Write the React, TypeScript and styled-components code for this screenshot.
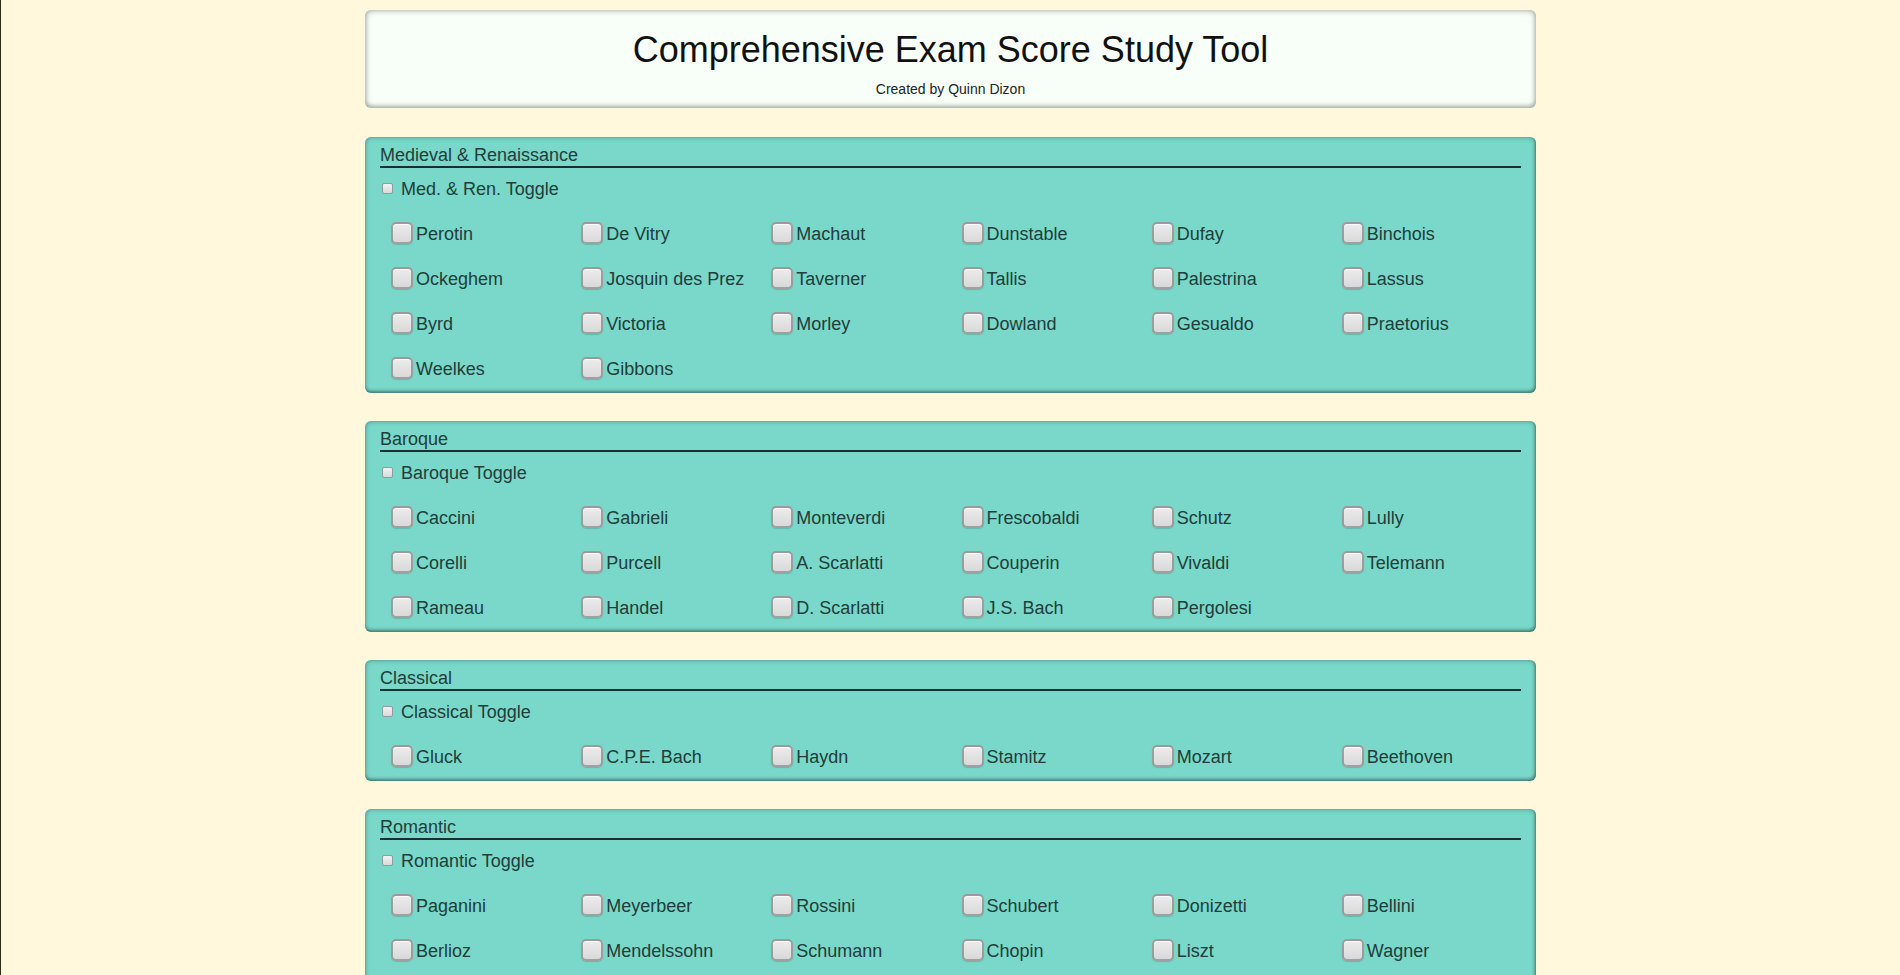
import React from "react";
import styled, { createGlobalStyle } from "styled-components";

const GlobalStyle = createGlobalStyle`
  html, body {
    margin: 0;
    padding: 0;
    background: #fff8dc;
  }
  body {
    border-left: 1px solid #2f2b17;
    font-family: "Liberation Sans", Arial, sans-serif;
  }
`;

const Page = styled.div`
  padding: 10px 0 40px;
  display: flex;
  flex-direction: column;
  align-items: center;
  gap: 28px;
`;

const Header = styled.header`
  box-sizing: border-box;
  width: 1171px;
  margin-bottom: 1px;
  padding: 19px 15px 11px;
  background: #f7fff8;
  border-radius: 6px;
  box-shadow: inset 0 0 6px rgba(0, 0, 0, 0.38), inset 0 -2px 4px rgba(0, 0, 0, 0.15);
  text-align: center;
`;

const Title = styled.h1`
  margin: 0;
  font-size: 36px;
  line-height: 42px;
  font-weight: 400;
  color: #111;
`;

const Credit = styled.div`
  margin-top: 10px;
  font-size: 14px;
  line-height: 16px;
  color: #222;
`;

const Section = styled.section`
  box-sizing: border-box;
  width: 1171px;
  padding: 8px 15px 1px;
  background: #79d8c9;
  border-radius: 6px;
  box-shadow: inset 0 0 5px rgba(0, 0, 0, 0.35), inset -1px -2px 3px rgba(0, 0, 0, 0.3);
  color: #223d3a;
`;

const SectionTitle = styled.div`
  font-size: 18px;
  line-height: 21px;
  border-bottom: 2px solid #17302e;
`;

const ToggleRow = styled.label`
  display: flex;
  align-items: center;
  margin-top: 11px;
  height: 21px;
  font-size: 18px;
`;

const SmallBox = styled.span`
  box-sizing: border-box;
  width: 11px;
  height: 11px;
  margin: -2px 8px 0 2px;
  border-radius: 2px;
  border: 1px solid #8f9c9a;
  background: linear-gradient(#f2f2f2, #d9d9d9);
`;

const Grid = styled.div`
  display: grid;
  grid-template-columns: repeat(6, 1fr);
  grid-auto-rows: 45px;
  margin-top: 12px;
`;

const Item = styled.label`
  display: flex;
  align-items: center;
  padding-left: 11px;
  font-size: 18px;
  line-height: 21px;
  white-space: nowrap;
`;

const Box = styled.span`
  box-sizing: border-box;
  width: 22px;
  height: 22px;
  margin: -3px 3px 0 0;
  border-radius: 5px;
  border: 2px solid rgba(120, 120, 120, 0.65);
  background: linear-gradient(#ececec, #d9d9d9);
  box-shadow: inset 0 1px 1px rgba(255, 255, 255, 0.8), 0 1px 1px rgba(0, 0, 0, 0.15);
`;

type Era = { title: string; toggle: string; composers: string[] };

const eras: Era[] = [
  {
    title: "Medieval & Renaissance",
    toggle: "Med. & Ren. Toggle",
    composers: [
      "Perotin", "De Vitry", "Machaut", "Dunstable", "Dufay", "Binchois",
      "Ockeghem", "Josquin des Prez", "Taverner", "Tallis", "Palestrina", "Lassus",
      "Byrd", "Victoria", "Morley", "Dowland", "Gesualdo", "Praetorius",
      "Weelkes", "Gibbons",
    ],
  },
  {
    title: "Baroque",
    toggle: "Baroque Toggle",
    composers: [
      "Caccini", "Gabrieli", "Monteverdi", "Frescobaldi", "Schutz", "Lully",
      "Corelli", "Purcell", "A. Scarlatti", "Couperin", "Vivaldi", "Telemann",
      "Rameau", "Handel", "D. Scarlatti", "J.S. Bach", "Pergolesi",
    ],
  },
  {
    title: "Classical",
    toggle: "Classical Toggle",
    composers: ["Gluck", "C.P.E. Bach", "Haydn", "Stamitz", "Mozart", "Beethoven"],
  },
  {
    title: "Romantic",
    toggle: "Romantic Toggle",
    composers: [
      "Paganini", "Meyerbeer", "Rossini", "Schubert", "Donizetti", "Bellini",
      "Berlioz", "Mendelssohn", "Schumann", "Chopin", "Liszt", "Wagner",
      "Verdi", "Smetana", "Franck", "Brahms", "Bruckner", "Tchaikovsky",
    ],
  },
];

const EraSection = ({ era }: { era: Era }) => (
  <Section>
    <SectionTitle>{era.title}</SectionTitle>
    <ToggleRow>
      <SmallBox />
      {era.toggle}
    </ToggleRow>
    <Grid>
      {era.composers.map((name) => (
        <Item key={name}>
          <Box />
          {name}
        </Item>
      ))}
    </Grid>
  </Section>
);

export default function App() {
  return (
    <>
      <GlobalStyle />
      <Page>
        <Header>
          <Title>Comprehensive Exam Score Study Tool</Title>
          <Credit>Created by Quinn Dizon</Credit>
        </Header>
        {eras.map((era) => (
          <EraSection key={era.title} era={era} />
        ))}
      </Page>
    </>
  );
}
